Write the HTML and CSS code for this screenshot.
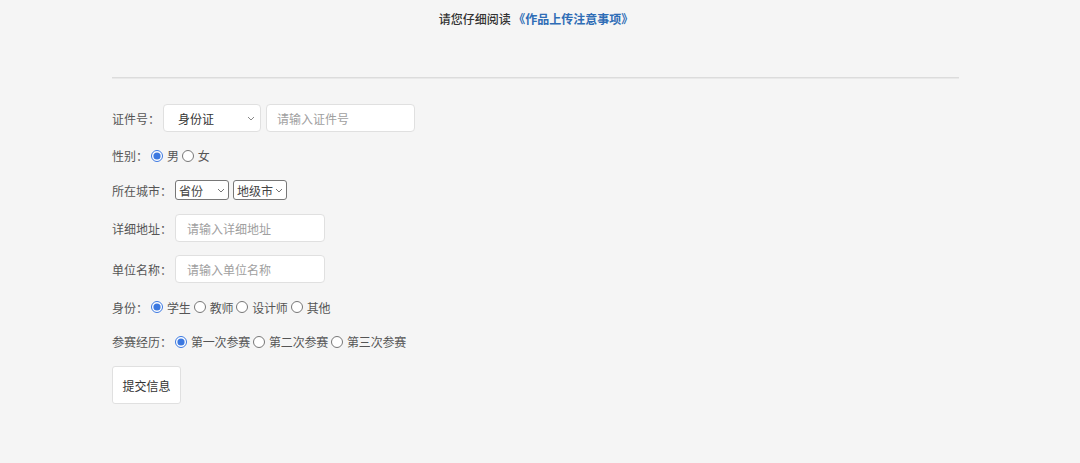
FILE: index.html
```html
<!DOCTYPE html>
<html lang="zh-CN">
<head>
    <meta charset="UTF-8">
    <meta name="viewport" content="width=device-width, initial-scale=1.0">
    <title>报名信息</title>
    <link rel="stylesheet" href="styles.css">
</head>
<body>
    <div class="notice">
        请您仔细阅读 <a class="notice-link" href="#">《作品上传注意事项》</a>
    </div>

    <div class="wrap">
        <hr class="divider">

        <form class="info-form">
            <div class="row row-tall">
                <span class="label">证件号：</span>
                <span class="select-box id-box">
                    <select class="field select-id">
                        <option>身份证</option>
                        <option>护照</option>
                    </select>
                    <svg class="chevron" width="8" height="5" viewBox="0 0 8 5"><path d="M1 1l3 3 3-3" fill="none" stroke="#888" stroke-width="1"/></svg>
                </span>
                <input class="field input-id" type="text" placeholder="请输入证件号">
            </div>

            <div class="row">
                <span class="label">性别：</span>
                <label class="choice"><input type="radio" name="sex" checked>男</label>
                <label class="choice"><input type="radio" name="sex">女</label>
            </div>

            <div class="row row-city">
                <span class="label">所在城市：</span>
                <span class="select-box province-box">
                    <select class="small-select province">
                        <option>省份</option>
                    </select>
                    <svg class="chevron small" width="8" height="5" viewBox="0 0 8 5"><path d="M1 1l3 3 3-3" fill="none" stroke="#777" stroke-width="1"/></svg>
                </span>
                <span class="select-box">
                    <select class="small-select city">
                        <option>地级市</option>
                    </select>
                    <svg class="chevron small" width="8" height="5" viewBox="0 0 8 5"><path d="M1 1l3 3 3-3" fill="none" stroke="#777" stroke-width="1"/></svg>
                </span>
            </div>

            <div class="row row-tall">
                <span class="label">详细地址：</span>
                <input class="field input-wide" type="text" placeholder="请输入详细地址">
            </div>

            <div class="row row-tall">
                <span class="label">单位名称：</span>
                <input class="field input-wide" type="text" placeholder="请输入单位名称">
            </div>

            <div class="row row-city">
                <span class="label">身份：</span>
                <label class="choice"><input type="radio" name="role" checked>学生</label>
                <label class="choice"><input type="radio" name="role">教师</label>
                <label class="choice"><input type="radio" name="role">设计师</label>
                <label class="choice"><input type="radio" name="role">其他</label>
            </div>

            <div class="row">
                <span class="label">参赛经历：</span>
                <label class="choice"><input type="radio" name="times" checked>第一次参赛</label>
                <label class="choice"><input type="radio" name="times">第二次参赛</label>
                <label class="choice"><input type="radio" name="times">第三次参赛</label>
            </div>

            <button class="submit" type="button">提交信息</button>
        </form>
    </div>
</body>
</html>
```

FILE: styles.css
```css
body {
    margin: 0;
    background-color: #f5f5f5;
    font-family: "Noto Sans CJK SC", "Noto Sans", sans-serif;
    font-size: 12px;
    color: #555;
}

.notice {
    height: 38px;
    line-height: 38px;
    text-align: center;
    padding-right: 8px;
    color: #333;
    font-weight: 500;
}

.notice-link {
    color: #2f6db6;
    font-weight: bold;
    text-decoration: none;
}

.wrap {
    width: 847px;
    margin-left: 112px;
    padding-top: 39px;
}

.divider {
    margin: 0;
    border: none;
    border-top: 1px solid #dcdcdc;
    border-bottom: 1px solid #e9e9e9;
}

.info-form {
    display: flex;
    flex-direction: column;
    align-items: flex-start;
    gap: 13px;
    padding-top: 25px;
}

.row {
    display: flex;
    align-items: center;
    height: 21px;
}

.row-tall {
    height: 28px;
}

.row-city {
    height: 22px;
}

.label {
    margin-right: 3px;
    color: #555;
}

.field {
    box-sizing: border-box;
    height: 28px;
    border: 1px solid #e0e0e0;
    border-radius: 4px;
    background-color: #fff;
    font-family: inherit;
    font-size: 12px;
    color: #333;
    outline: none;
}

.select-box {
    position: relative;
    display: flex;
}

.id-box {
    margin-right: 5px;
}

.province-box {
    margin-right: 4px;
}

.chevron {
    position: absolute;
    right: 6px;
    top: 50%;
    margin-top: -2px;
    pointer-events: none;
}

.chevron.small {
    right: 4px;
}

.select-id {
    appearance: none;
    width: 98px;
    padding: 0 14px;
}

.input-id {
    width: 149px;
    padding: 0 10px;
}

.input-wide {
    width: 150px;
    padding: 0 11px;
}

.field::placeholder {
    color: #a0a0a0;
}

.small-select {
    appearance: none;
    box-sizing: border-box;
    height: 20px;
    width: 54px;
    font-family: inherit;
    font-size: 12px;
    color: #444;
    border: 1px solid #777;
    border-radius: 3px;
    background-color: #fff;
    padding: 0 0 0 3px;
}

.choice {
    display: flex;
    align-items: center;
    margin-right: 3px;
    color: #555;
    letter-spacing: -0.2px;
}

.choice input {
    width: 12px;
    height: 12px;
    margin: 0 4px 0 0;
    accent-color: #3b78e0;
}

.submit {
    margin-top: 1px;
    width: 69px;
    height: 38px;
    border: 1px solid #e0e0e0;
    border-radius: 3px;
    background-color: #fff;
    font-family: inherit;
    font-size: 12px;
    color: #333;
    cursor: pointer;
}
```
